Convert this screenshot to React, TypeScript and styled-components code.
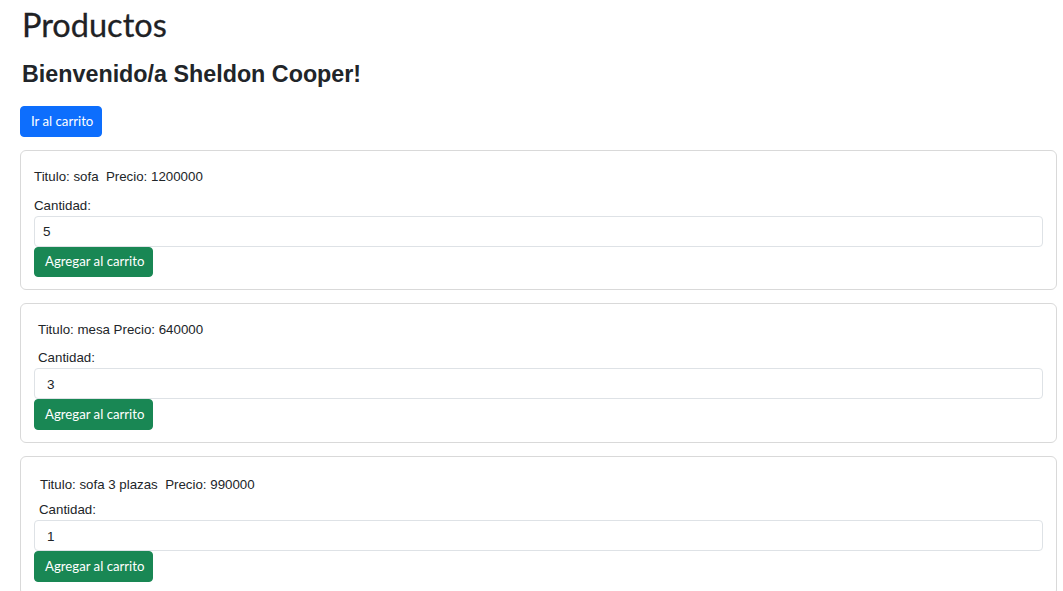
import React, { useState } from "react";
import styled, { createGlobalStyle } from "styled-components";

const GlobalStyle = createGlobalStyle`
  html, body { margin: 0; padding: 0; background: #ffffff; }
  body { color: #212529; font-family: "Liberation Sans", Arial, sans-serif; }
  * { box-sizing: border-box; }
`;

const Page = styled.main`
  display: flex;
  flex-direction: column;
  align-items: flex-start;
  padding: 6px 6px 0 20px;
`;

const Title = styled.h1`
  margin: 0 0 0 2px;
  font-family: Lato, "Open Sans", sans-serif;
  font-weight: 400;
  font-size: 32.5px;
  line-height: 38px;
  color: #1f2225;
  -webkit-text-stroke: 0.3px #1f2225;
`;

const Welcome = styled.h2`
  margin: 16px 0 0 2px;
  font-family: "Liberation Sans", Arial, sans-serif;
  font-weight: 700;
  font-size: 23.3px;
  line-height: 28px;
  color: #212529;
`;

const Button = styled.button<{ $variant: "primary" | "success" }>`
  display: inline-flex;
  align-items: center;
  height: 31px;
  padding: 0 8px 0 10px;
  border: 1px solid ${(p) => (p.$variant === "primary" ? "#0d6efd" : "#198754")};
  border-radius: 4px;
  background: ${(p) => (p.$variant === "primary" ? "#0d6efd" : "#198754")};
  color: #ffffff;
  font-family: Lato, "Open Sans", sans-serif;
  font-size: 13.2px;
  line-height: 21px;
  cursor: pointer;
`;

const TopButton = styled(Button)`
  margin-top: 18px;
  margin-bottom: 13px;
`;

const CardList = styled.div`
  display: flex;
  flex-direction: column;
  gap: 13px;
  width: 1037px;
`;

const Card = styled.section`
  display: flex;
  flex-direction: column;
  align-items: stretch;
  height: 140px;
  padding: 15px 13px 12px 13px;
  border: 1px solid #d9d9d9;
  border-radius: 6px;
  background: #ffffff;
`;

const Info = styled.p<{ $indent: number; $top: number; $gap: number }>`
  margin: ${(p) => p.$top}px 0 ${(p) => p.$gap}px ${(p) => p.$indent}px;
  font-size: 13.3px;
  line-height: 21px;
  color: #212529;
  white-space: pre;
`;

const Label = styled.label<{ $indent: number }>`
  display: block;
  margin-left: ${(p) => p.$indent}px;
  font-size: 13.3px;
  line-height: 21px;
  color: #212529;
`;

const Qty = styled.input<{ $pad: number }>`
  display: block;
  width: 100%;
  height: 31px;
  padding: 4px 8px 3px ${(p) => p.$pad}px;
  border: 1px solid #dee2e6;
  border-radius: 4px;
  font-family: "Liberation Sans", Arial, sans-serif;
  font-size: 13.5px;
  color: #212529;
  background: #ffffff;
  outline: none;
`;

const AddButton = styled(Button)`
  align-self: flex-start;
`;

type Product = {
  id: number;
  text: string;
  qty: number;
  indent: number;
  labelIndent: number;
  top: number;
  gap: number;
  pad: number;
};

const products: Product[] = [
  { id: 1, text: "Titulo: sofa\u00a0 Precio: 1200000", qty: 5, indent: 0, labelIndent: 0, top: 0, gap: 8, pad: 8 },
  { id: 2, text: "Titulo: mesa Precio: 640000", qty: 3, indent: 4, labelIndent: 4, top: 0, gap: 7, pad: 12 },
  { id: 3, text: "Titulo: sofa 3 plazas\u00a0 Precio: 990000", qty: 1, indent: 6, labelIndent: 5, top: 2, gap: 4, pad: 12 },
];

function ProductCard({ p }: { p: Product }) {
  const [qty, setQty] = useState(String(p.qty));
  return (
    <Card>
      <Info $indent={p.indent} $top={p.top} $gap={p.gap}>
        {p.text}
      </Info>
      <Label $indent={p.labelIndent} htmlFor={`qty-${p.id}`}>
        Cantidad:
      </Label>
      <Qty
        id={`qty-${p.id}`}
        $pad={p.pad}
        value={qty}
        onChange={(e) => setQty(e.target.value)}
      />
      <AddButton $variant="success">Agregar al carrito</AddButton>
    </Card>
  );
}

export default function App() {
  return (
    <>
      <GlobalStyle />
      <Page>
        <Title>Productos</Title>
        <Welcome>Bienvenido/a Sheldon Cooper!</Welcome>
        <TopButton $variant="primary">Ir al carrito</TopButton>
        <CardList>
          {products.map((p) => (
            <ProductCard key={p.id} p={p} />
          ))}
        </CardList>
      </Page>
    </>
  );
}
